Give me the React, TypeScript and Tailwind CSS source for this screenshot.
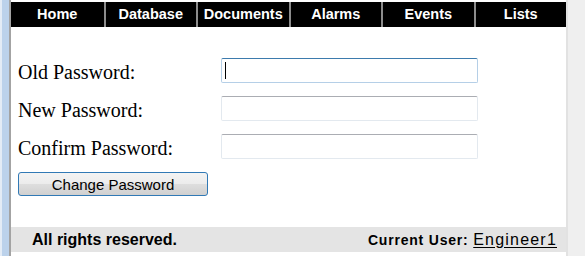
const tabs = ["Home", "Database", "Documents", "Alarms", "Events", "Lists"];

const fields = [
  { label: "Old Password:", focused: true },
  { label: "New Password:", focused: false },
  { label: "Confirm Password:", focused: false },
];

export default function App() {
  return (
    <div className="flex h-[256px] w-[585px] overflow-hidden bg-white">
      {/* left frame edge */}
      <div className="flex h-full w-[11px] shrink-0">
        <div className="w-[2px] bg-[#e4ecf6]" />
        <div className="w-[7px] bg-[#bcd2eb]" />
        <div className="w-[2px] bg-[#a3a3a3]" />
      </div>

      <main className="flex h-full w-[555px] shrink-0 flex-col pt-[2px]">
        <nav className="grid h-[25px] grid-cols-6 bg-black font-['Liberation_Sans',Arial,sans-serif] text-[14.5px] font-bold text-white">
          {tabs.map((tab, i) => (
            <div
              key={tab}
              className={
                i === 0
                  ? "flex items-center justify-center pt-px"
                  : "flex items-center justify-center border-l-2 border-[#8c8c8c] pt-px"
              }
            >
              {tab}
            </div>
          ))}
        </nav>

        <form className="flex flex-col gap-[13px] pl-[7px] pt-[31px] font-['Liberation_Serif','Times_New_Roman',serif] text-[20px] text-black">
          {fields.map((f) => (
            <div key={f.label} className="flex h-[25px] items-end">
              <label className="w-[203px] shrink-0 leading-[22px]">{f.label}</label>
              <div
                className={
                  f.focused
                    ? "relative h-[25px] w-[257px] rounded-[2px] border border-[#b5cfe7] border-t-[#3d7bad]"
                    : "h-[25px] w-[257px] rounded-[2px] border border-[#e3e9ef] border-t-[#abadb3]"
                }
              >
                {f.focused && <div className="absolute left-[3px] top-[3px] h-[17px] w-px bg-black" />}
              </div>
            </div>
          ))}
          <button
            type="button"
            className="h-[24px] w-[190px] rounded-[3px] border border-[#3179b5] bg-[linear-gradient(#f3f3f3_0%,#ececec_50%,#dedede_51%,#d0d0d0_100%)] font-['Liberation_Sans',Arial,sans-serif] text-[15px] leading-none text-black"
          >
            Change Password
          </button>
        </form>

        <footer className="mt-auto mb-[4px] flex h-[25px] items-center justify-between bg-[#e4e4e4] pl-[21px] pr-[9px] font-['Liberation_Sans',Arial,sans-serif] text-black">
          <span className="text-[16px] font-bold">All rights reserved.</span>
          <span className="text-[14px] font-bold tracking-[0.8px]">
            Current User:{" "}
            <span className="text-[16px] font-normal tracking-[1.2px] underline underline-offset-2">Engineer1</span>
          </span>
        </footer>
      </main>

      {/* right scroll track */}
      <div className="flex h-full flex-1">
        <div className="w-[2px] bg-[#e2e2e2]" />
        <div className="flex-1 bg-[#efefef]" />
      </div>
    </div>
  );
}
